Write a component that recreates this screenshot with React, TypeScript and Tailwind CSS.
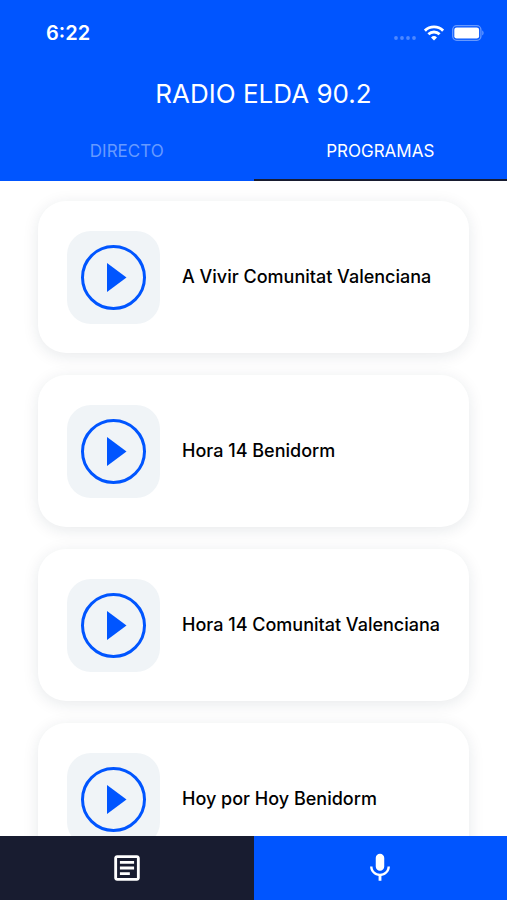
import { useState } from 'react';
import { MdMic, MdOutlineArticle } from 'react-icons/md';

const programs = [
	'A Vivir Comunitat Valenciana',
	'Hora 14 Benidorm',
	'Hora 14 Comunitat Valenciana',
	'Hoy por Hoy Benidorm',
];

const tabs = ['DIRECTO', 'PROGRAMAS'];

const StatusBar = () => {
	return (
		<div className="flex items-center justify-between pl-[46px] pr-[23px] h-[66px]">
			<span className="text-xl leading-6 font-semibold">6:22</span>
			<div className="flex items-center gap-2">
				<svg width="22" height="18" viewBox="0 0 22 18" fill="#fff" fillOpacity="0.3">
					<circle cx="2" cy="14" r="1.9" />
					<circle cx="8" cy="14" r="1.9" />
					<circle cx="14" cy="14" r="1.9" />
					<circle cx="20" cy="14" r="1.9" />
				</svg>
				<svg width="20" height="16" viewBox="0 0 20 16" fill="none" stroke="#fff">
					<path d="M0.9 5.6a13 13 0 0 1 18.2 0" strokeWidth="2.9" />
					<path d="M4.4 9.3a8 8 0 0 1 11.2 0" strokeWidth="2.8" />
					<path
						d="M10 15.6 7 12.5a4.3 4.3 0 0 1 6 0Z"
						fill="#fff"
						stroke="none"
					/>
				</svg>
				<svg width="32" height="16" viewBox="0 0 32 16" fill="none">
					<rect
						x="0.7"
						y="0.7"
						width="28.2"
						height="14.6"
						rx="4"
						stroke="#fff"
						strokeOpacity="0.4"
						strokeWidth="1.3"
					/>
					<rect x="2.3" y="2.4" width="24.8" height="11.2" rx="2.4" fill="#fff" />
					<path d="M30.3 5.6c1.6.6 1.6 4.2 0 4.8Z" fill="#fff" fillOpacity="0.45" />
				</svg>
			</div>
		</div>
	);
};

const ProgramCard = ({ title }: { title: string }) => {
	return (
		<li className="flex items-center gap-[22px] shrink-0 h-[152px] pl-[29px] pr-4 rounded-[28px] bg-white shadow-[0_3px_16px_rgba(20,40,60,0.10)]">
			<button
				aria-label={`Reproducir ${title}`}
				className="flex items-center justify-center shrink-0 size-[93px] rounded-3xl bg-[#f0f4f7]"
			>
				<svg width="65" height="65" viewBox="0 0 65 65">
					<circle
						cx="32.5"
						cy="32.5"
						r="31"
						fill="none"
						stroke="#0055ff"
						strokeWidth="3"
					/>
					<path d="M26 18v29l19.5-14.5Z" fill="#0055ff" />
				</svg>
			</button>
			<h2 className="text-lg leading-6 font-medium text-black">{title}</h2>
		</li>
	);
};

const App = () => {
	const [tab, setTab] = useState('PROGRAMAS');

	return (
		<div className="flex flex-col h-screen bg-white font-['Inter',sans-serif]">
			<header className="shrink-0 bg-[#0055ff] text-white">
				<StatusBar />
				<h1 className="pl-5 h-14 text-[26px] leading-[56px] text-center">
					RADIO ELDA 90.2
				</h1>
				<nav className="flex h-[59px]">
					{tabs.map((name) => (
						<button
							key={name}
							onClick={() => setTab(name)}
							className={
								name === tab
									? 'flex-1 border-b-2 border-[#181c30] text-[17px] leading-6'
									: 'flex-1 border-b-2 border-transparent text-[17px] leading-6 text-[#669aff]'
							}
						>
							{name}
						</button>
					))}
				</nav>
			</header>
			<main className="flex-1 min-h-0 overflow-hidden">
				<ul className="flex flex-col gap-[22px] px-[38px] pt-5">
					{programs.map((title) => (
						<ProgramCard key={title} title={title} />
					))}
				</ul>
			</main>
			<footer className="flex shrink-0 h-16 text-white">
				<button
					aria-label="Noticias"
					className="flex flex-1 items-center justify-center bg-[#181c30]"
				>
					<MdOutlineArticle size={34} />
				</button>
				<button
					aria-label="Radio"
					className="flex flex-1 items-center justify-center bg-[#0055ff]"
				>
					<MdMic size={34} />
				</button>
			</footer>
		</div>
	);
};

export default App;
